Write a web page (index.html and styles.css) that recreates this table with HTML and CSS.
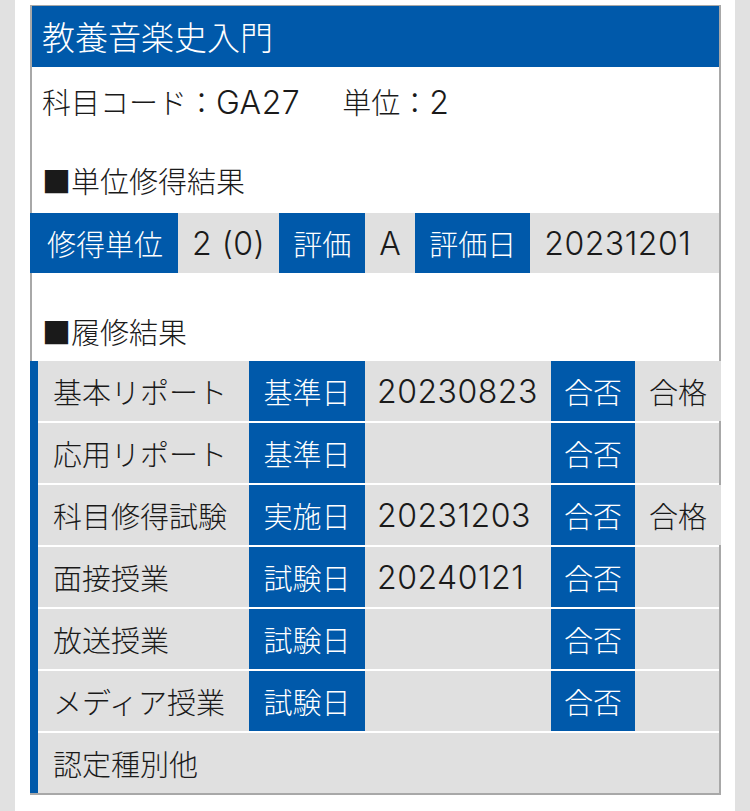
FILE: index.html
```html
<!DOCTYPE html>
<html lang="ja">
<head>
<meta charset="utf-8">
<title>教養音楽史入門</title>
<link rel="stylesheet" href="styles.css">
</head>
<body>
<div class="page">
  <div class="card">
    <div class="card-title">教養音楽史入門</div>
    <div class="code-row">
      <span>科目コード：<span class="num">GA27</span></span>
      <span>単位：<span class="num">2</span></span>
    </div>
    <div class="section-title">■単位修得結果</div>
    <div class="grade">
      <div class="cell head">修得単位</div>
      <div class="cell val num">2 (0)</div>
      <div class="cell head">評価</div>
      <div class="cell val num">A</div>
      <div class="cell head">評価日</div>
      <div class="cell val num fill">20231201</div>
    </div>
    <div class="section-title second">■履修結果</div>
    <div class="results">
      <div class="rrow">
        <div class="rc label">基本リポート</div>
        <div class="rc head">基準日</div>
        <div class="rc val num">20230823</div>
        <div class="rc head">合否</div>
        <div class="rc val">合格</div>
      </div>
      <div class="rrow">
        <div class="rc label">応用リポート</div>
        <div class="rc head">基準日</div>
        <div class="rc val num"></div>
        <div class="rc head">合否</div>
        <div class="rc val"></div>
      </div>
      <div class="rrow">
        <div class="rc label">科目修得試験</div>
        <div class="rc head">実施日</div>
        <div class="rc val num">20231203</div>
        <div class="rc head">合否</div>
        <div class="rc val">合格</div>
      </div>
      <div class="rrow">
        <div class="rc label">面接授業</div>
        <div class="rc head">試験日</div>
        <div class="rc val num">20240121</div>
        <div class="rc head">合否</div>
        <div class="rc val"></div>
      </div>
      <div class="rrow">
        <div class="rc label">放送授業</div>
        <div class="rc head">試験日</div>
        <div class="rc val num"></div>
        <div class="rc head">合否</div>
        <div class="rc val"></div>
      </div>
      <div class="rrow">
        <div class="rc label">メディア授業</div>
        <div class="rc head">試験日</div>
        <div class="rc val num"></div>
        <div class="rc head">合否</div>
        <div class="rc val"></div>
      </div>
      <div class="rrow single">
        <div class="rc label">認定種別他</div>
      </div>
    </div>
  </div>
</div>
</body>
</html>
```

FILE: styles.css
```css
* { box-sizing: border-box; }
html, body { margin: 0; padding: 0; }
body {
  background: #e1e1e1;
  font-family: "Noto Sans CJK JP", sans-serif;
  font-weight: 300;
  font-size: 29px;
  color: #1a1a1a;
}
.page {
  width: 720px;
  margin-left: 15px;
  min-height: 811px;
  background: #ffffff;
  padding-top: 5px;
  overflow: hidden;
}
.card {
  margin: 0 14px 0 15px;
  border: 2px solid #a8a8a8;
  background: #ffffff;
}
.num {
  font-family: "Inter", "Noto Sans CJK JP", sans-serif;
  font-weight: 300;
  font-size: 32px;
  letter-spacing: 0.5px;
}
.card-title {
  background: #0059aa;
  color: #ffffff;
  font-size: 33px;
  height: 61px;
  line-height: 61px;
  padding-left: 10px;
  margin-top: -1px;
}
.code-row {
  height: 67px;
  display: flex;
  align-items: center;
  gap: 42px;
  padding-left: 10px;
}
.section-title {
  height: 79px;
  display: flex;
  align-items: center;
  padding-top: 12px;
  padding-left: 10px;
}
.section-title.second {
  height: 88px;
  padding-top: 28px;
}
.grade {
  display: flex;
  height: 60px;
  margin-left: -2px;
}
.cell {
  display: flex;
  align-items: center;
  padding: 0 14px;
  white-space: nowrap;
}
.head {
  background: #0059aa;
  color: #ffffff;
}
.val, .label {
  background: #e0e0e0;
}
.grade .head:first-child { padding-left: 17px; padding-right: 15px; }
.fill { flex: 1; }
.results {
  margin-left: -2px;
  border-left: 8px solid #0059aa;
}
.rrow {
  display: grid;
  grid-template-columns: 211px 116px 186px 84px 1fr;
  height: 60px;
  background: #e0e0e0;
}
.rrow + .rrow {
  border-top: 2px solid #ffffff;
  height: 62px;
}
.rrow.single {
  grid-template-columns: 1fr;
}
.rc {
  display: flex;
  align-items: center;
  padding: 0 14px;
  white-space: nowrap;
}
.rc.label { padding-left: 15px; }
.rc.head { justify-content: center; padding: 0; }
.rc.val.num { padding-left: 12px; }
```
